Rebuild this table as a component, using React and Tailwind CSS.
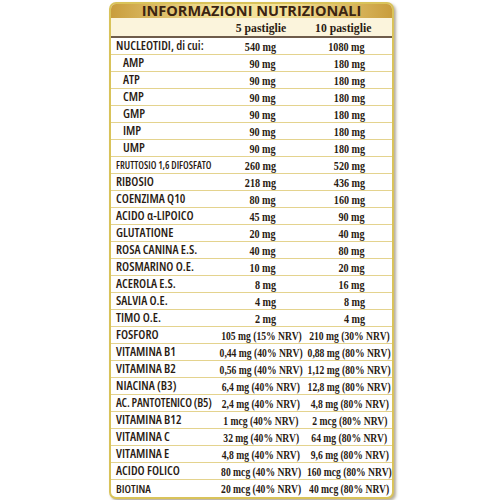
const rows = [
  ["NUCLEOTIDI, di cui:", "540 mg", "1080 mg", ""],
  ["AMP", "90 mg", "180 mg", "i"],
  ["ATP", "90 mg", "180 mg", "i"],
  ["CMP", "90 mg", "180 mg", "i"],
  ["GMP", "90 mg", "180 mg", "i"],
  ["IMP", "90 mg", "180 mg", "i"],
  ["UMP", "90 mg", "180 mg", "i"],
  ["FRUTTOSIO 1,6 DIFOSFATO", "260 mg", "520 mg", "s"],
  ["RIBOSIO", "218 mg", "436 mg", ""],
  ["COENZIMA Q10", "80 mg", "160 mg", ""],
  ["ACIDO α-LIPOICO", "45 mg", "90 mg", ""],
  ["GLUTATIONE", "20 mg", "40 mg", ""],
  ["ROSA CANINA E.S.", "40 mg", "80 mg", ""],
  ["ROSMARINO O.E.", "10 mg", "20 mg", ""],
  ["ACEROLA E.S.", "8 mg", "16 mg", ""],
  ["SALVIA O.E.", "4 mg", "8 mg", ""],
  ["TIMO O.E.", "2 mg", "4 mg", ""],
  ["FOSFORO", "105 mg (15% NRV)", "210 mg (30% NRV)", ""],
  ["VITAMINA B1", "0,44 mg (40% NRV)", "0,88 mg (80% NRV)", ""],
  ["VITAMINA B2", "0,56 mg (40% NRV)", "1,12 mg (80% NRV)", ""],
  ["NIACINA (B3)", "6,4 mg (40% NRV)", "12,8 mg (80% NRV)", ""],
  ["AC. PANTOTENICO (B5)", "2,4 mg (40% NRV)", "4,8 mg (80% NRV)", "p"],
  ["VITAMINA B12", "1 mcg (40% NRV)", "2 mcg (80% NRV)", ""],
  ["VITAMINA C", "32 mg (40% NRV)", "64 mg (80% NRV)", ""],
  ["VITAMINA E", "4,8 mg (40% NRV)", "9,6 mg (80% NRV)", ""],
  ["ACIDO FOLICO", "80 mcg (40% NRV)", "160 mcg (80% NRV)", ""],
  ["BIOTINA", "20 mcg (40% NRV)", "40 mcg (80% NRV)", "m"],
];

function labelClass(k) {
  if (k === "i") return "pl-[12px] text-[12.5px]";
  if (k === "s") return "pl-[5px] text-[10px]";
  if (k === "p") return "pl-[5px] text-[12px] tracking-[-0.2px]";
  if (k === "m") return "pl-[5px] text-[11.5px]";
  return "pl-[5px] text-[12.5px]";
}

function Val({ text, pr }) {
  const nrv = text.includes("NRV");
  if (nrv) {
    return (
      <div className="min-w-0 flex justify-center">
        <span className="shrink-0 inline-block font-['Liberation_Serif',serif] font-bold text-[13px] origin-center scale-x-[0.74]">
          {text}
        </span>
      </div>
    );
  }
  return (
    <div className={"min-w-0 flex justify-end " + pr}>
      <span className="shrink-0 inline-block font-['Liberation_Serif',serif] font-bold text-[13px] origin-right scale-x-[0.78]">
        {text}
      </span>
    </div>
  );
}

export default function App() {
  return (
    <div className="w-[500px] h-[500px] bg-white pt-[2px] pl-[109px]">
      <div className="w-[285px] h-[497px] rounded-[7px] border-2 border-[#d9c35a] bg-white shadow-[2px_2px_3px_rgba(90,70,30,0.45)] overflow-hidden text-[#2a1b12]">
        <div className="h-[14px] flex items-center justify-center bg-[linear-gradient(90deg,#c99d3c,#f3e29a_38%,#f3e29a_62%,#c99d3c)] font-['Open_Sans',sans-serif] font-bold text-[14.5px] leading-none text-[#3b2412]">
          INFORMAZIONI NUTRIZIONALI
        </div>
        <div className="h-[20px] grid grid-cols-[104px_92px_minmax(0,1fr)] items-center bg-[#fbf4dc] border-b-2 border-[#6e5c4b] font-['Liberation_Serif',serif] text-[13px] font-bold leading-none">
          <div />
          <div className="flex justify-center">
            <span className="inline-block scale-x-[0.9]">5 pastiglie</span>
          </div>
          <div className="flex justify-center pr-[12px]">
            <span className="inline-block scale-x-[0.9]">10 pastiglie</span>
          </div>
        </div>
        {rows.map(([l, a, b, k], i) => (
          <div
            key={i}
            className={
              "h-[17px] grid grid-cols-[104px_92px_minmax(0,1fr)] items-center leading-none whitespace-nowrap " +
              (i < rows.length - 1 ? "border-b border-[#e4d38e]" : "")
            }
          >
            <div className={"font-['Open_Sans',sans-serif] [font-stretch:75%] font-semibold " + labelClass(k)}>{l}</div>
            <Val text={a} pr="pr-[31px]" />
            <Val text={b} pr="pr-[27px]" />
          </div>
        ))}
      </div>
    </div>
  );
}
